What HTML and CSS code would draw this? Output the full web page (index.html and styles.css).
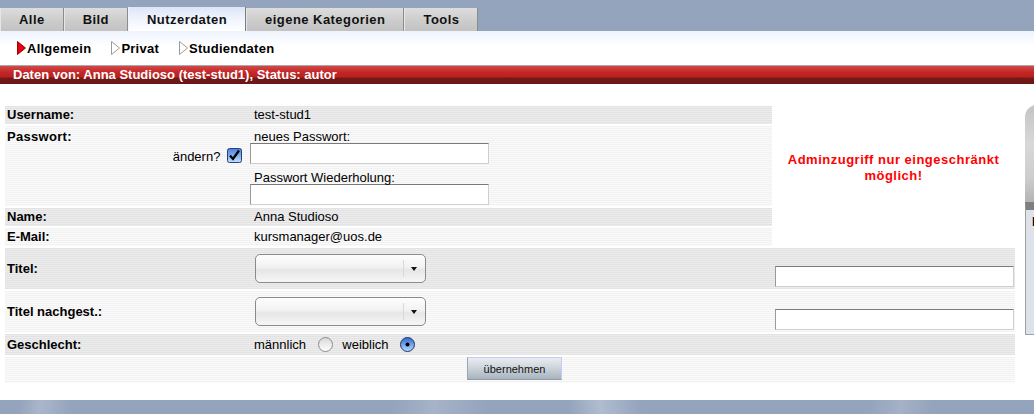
FILE: index.html
```html
<!DOCTYPE html>
<html>
<head>
	<meta charset="utf-8">
	<title>Nutzerdaten - Allgemein</title>
	<link rel="stylesheet" href="styles.css">
</head>
<body>
	<div class="tabs">
		<div class="tab">Alle</div>
		<div class="tab">Bild</div>
		<div class="tab active">Nutzerdaten</div>
		<div class="tab">eigene Kategorien</div>
		<div class="tab">Tools</div>
	</div>
	<div class="page">
		<div class="subnav">
			<span class="item current">
				<svg class="tri" width="9" height="14" viewBox="0 0 9 14"><polygon points="0.5,0.5 8.5,7 0.5,13.5" fill="#e8000a" stroke="#a00008"/></svg>Allgemein
			</span>
			<span class="item">
				<svg class="tri" width="9" height="14" viewBox="0 0 9 14"><polygon points="0.5,0.5 8.5,7 0.5,13.5" fill="#fff" stroke="#9a9a9a"/></svg>Privat
			</span>
			<span class="item">
				<svg class="tri" width="9" height="14" viewBox="0 0 9 14"><polygon points="0.5,0.5 8.5,7 0.5,13.5" fill="#fff" stroke="#9a9a9a"/></svg>Studiendaten
			</span>
		</div>
		<div class="topic">Daten von: Anna Studioso (test-stud1), Status: autor</div>
		<div class="main">
			<table class="form">
				<colgroup>
					<col class="c1">
					<col class="c2">
					<col class="c3">
				</colgroup>
				<tr class="dark">
					<td class="label">Username:</td>
					<td class="value">test-stud1</td>
					<td class="notice" rowspan="4">Adminzugriff nur eingeschränkt<br>möglich!</td>
				</tr>
				<tr class="light pw">
					<td class="label top">
						<div class="pwlabel">Passwort:</div>
						<div class="change">ändern?
							<svg class="check" width="15" height="15" viewBox="0 0 15 15">
								<defs>
									<linearGradient id="cb" x1="0" y1="0" x2="0" y2="1">
										<stop offset="0" stop-color="#4a7fd8"/>
										<stop offset="0.5" stop-color="#7fb0f0"/>
										<stop offset="1" stop-color="#c4e2ff"/>
									</linearGradient>
								</defs>
								<rect x="0.5" y="0.5" width="14" height="14" rx="2" fill="url(#cb)" stroke="#2a3f78"/>
								<path d="M3 7.5 L6 11 L12 2.5" fill="none" stroke="#000" stroke-width="2.2"/>
							</svg>
						</div>
					</td>
					<td class="value top">
						<div class="fieldlabel">neues Passwort:</div>
						<input class="text" type="password">
						<div class="fieldlabel second">Passwort Wiederholung:</div>
						<input class="text" type="password">
					</td>
				</tr>
				<tr class="dark">
					<td class="label">Name:</td>
					<td class="value">Anna Studioso</td>
				</tr>
				<tr class="light">
					<td class="label">E-Mail:</td>
					<td class="value">kursmanager@uos.de</td>
				</tr>
				<tr class="dark tall">
					<td class="label">Titel:</td>
					<td class="value"><span class="select"></span></td>
					<td class="extra"><input class="text" type="text"></td>
				</tr>
				<tr class="light tall">
					<td class="label">Titel nachgest.:</td>
					<td class="value"><span class="select"></span></td>
					<td class="extra"><input class="text" type="text"></td>
				</tr>
				<tr class="dark gender">
					<td class="label">Geschlecht:</td>
					<td class="value">männlich
						<svg class="radio" width="15" height="15" viewBox="0 0 15 15">
							<defs>
								<linearGradient id="ru" x1="0" y1="0" x2="0" y2="1">
									<stop offset="0" stop-color="#d8d8d8"/>
									<stop offset="1" stop-color="#ffffff"/>
								</linearGradient>
							</defs>
							<circle cx="7.5" cy="7.5" r="7" fill="url(#ru)" stroke="#8a8a8a"/>
						</svg>
						<span class="opt">weiblich</span>
						<svg class="radio" width="15" height="15" viewBox="0 0 15 15">
							<defs>
								<linearGradient id="rc" x1="0" y1="0" x2="0" y2="1">
									<stop offset="0" stop-color="#2f68d0"/>
									<stop offset="1" stop-color="#b8dcff"/>
								</linearGradient>
							</defs>
							<circle cx="7.5" cy="7.5" r="7" fill="url(#rc)" stroke="#23366e"/>
							<circle cx="7.5" cy="7.5" r="2" fill="#000"/>
						</svg>
					</td>
					<td class="extra"></td>
				</tr>
				<tr class="light submit">
					<td colspan="3"><button class="button">übernehmen</button></td>
				</tr>
			</table>
			<div class="sidebar">
				<div class="sidehead"></div>
				<div class="sidebox">Informationen</div>
			</div>
		</div>
	</div>
	<div class="footer"></div>
</body>
</html>
```

FILE: styles.css
```css
body {
	margin: 0;
	background: #94a4bd;
	font-family: "Liberation Sans", Arial, sans-serif;
	font-size: 13px;
	color: #000;
	overflow: hidden;
}

/* Reiter oben */
.tabs {
	display: flex;
	height: 31px;
	padding-top: 8px;
	box-sizing: border-box;
}

.tab {
	height: 23px;
	line-height: 23px;
	padding: 0 18px;
	font-weight: bold;
	letter-spacing: 0.45px;
	color: #111;
	background: linear-gradient(#dddddd, #cbcbcb 60%, #c2c2c2);
	border-left: 1px solid #e6e6e6;
	border-right: 1px solid #8c8c8c;
}

.tab.active {
	margin-top: -1px;
	height: 24px;
	line-height: 25px;
	background: linear-gradient(#dce5f8, #eef3fd 45%, #fff);
	border-left-color: #f4f4f4;
	border-right-color: #7d7d7d;
}

/* weisser Inhaltsbereich */
.page {
	background: #fff;
	height: 369px;
	overflow: hidden;
}

.subnav {
	height: 34px;
	padding-left: 17px;
	display: flex;
	align-items: center;
	font-weight: bold;
	letter-spacing: 0.25px;
	background: linear-gradient(#eef3fd, #fff 45%);
}

.subnav .item {
	display: inline-flex;
	align-items: center;
	margin-right: 20px;
}

.subnav .tri {
	margin-right: 1px;
}

.topic {
	border-top: 1px solid #a9a9a9;
	height: 18px;
	line-height: 18px;
	padding-left: 13px;
	color: #fff;
	font-weight: bold;
	background: linear-gradient(#d24a4a, #c42626 35%, #b82121 62%, #751818 66%, #6a1717);
}

.main {
	display: flex;
	align-items: flex-start;
	padding-top: 20px;
	overflow: hidden;
}

/* Formular */
.form {
	flex-shrink: 0;
	margin-left: 5px;
	width: 1010px;
	table-layout: fixed;
	border-collapse: separate;
	border-spacing: 0 2px;
}

.form col.c1 { width: 245px; }
.form col.c2 { width: 522px; }
.form col.c3 { width: 243px; }

.form td {
	padding: 0;
	height: 18px;
	line-height: 16px;
	vertical-align: middle;
}

.form .dark td {
	background: repeating-linear-gradient(#e3e3e3 0 1px, #ececec 1px 2px);
}

.form .light td {
	background: repeating-linear-gradient(#f2f2f2 0 1px, #fafafa 1px 2px);
}

.form td.notice {
	background: #fff;
	text-align: center;
	color: #f00;
	font-weight: bold;
	padding-bottom: 16px;
	letter-spacing: 0.5px;
}

.form td.label {
	padding-left: 2px;
	font-weight: bold;
}

.form td.value {
	padding-left: 4px;
}

.form td.top {
	vertical-align: top;
}

.form .pw td {
	height: 80px;
}

.pwlabel,
.fieldlabel {
	line-height: 13px;
	margin-top: 4px;
}

.pwlabel {
	letter-spacing: 0.3px;
}

.fieldlabel.second {
	margin-top: 7px;
}

.change {
	text-align: right;
	padding-right: 8px;
	margin-top: 5px;
	font-weight: normal;
}

.change .check {
	vertical-align: -2px;
	margin-left: 3px;
}

.form td.value input.text {
	margin-left: -4px;
}

input.text {
	display: block;
	box-sizing: border-box;
	width: 239px;
	height: 21px;
	margin: 0;
	border: 1px solid #cfcfcf;
	border-top-color: #7a7a7a;
	border-left-color: #9a9a9a;
	background: #fff;
}

.form .tall td {
	height: 41px;
}

.form td.extra {
	padding-left: 3px;
	vertical-align: bottom;
}

.form td.extra input.text {
	margin-bottom: 2px;
}

.select {
	position: relative;
	display: block;
	width: 171px;
	height: 29px;
	margin-left: 1px;
	box-sizing: border-box;
	border: 1px solid #8a8a8a;
	border-radius: 5px;
	background: linear-gradient(#fdfdfd, #f2f2f2 45%, #e6e6e6 55%, #f6f6f6);
}

.select::before {
	content: "";
	position: absolute;
	right: 21px;
	top: 5px;
	bottom: 5px;
	border-left: 1px solid #d8d8d8;
}

.select::after {
	content: "";
	position: absolute;
	right: 8px;
	top: 12px;
	border-left: 3px solid transparent;
	border-right: 3px solid transparent;
	border-top: 4px solid #111;
}

.form .gender td {
	height: 21px;
}

.radio {
	vertical-align: -3px;
	margin: 0 6px 0 8px;
}

.form .submit td {
	height: 26px;
	vertical-align: top;
	text-align: center;
}

.button {
	width: 95px;
	height: 23px;
	margin: 0 0 0 9px;
	padding: 0;
	font-family: "Liberation Sans", Arial, sans-serif;
	font-size: 11px;
	color: #111;
	border: 1px solid #c5cbf2;
	border-left-color: #9aa6b2;
	border-bottom-color: #8e9aa6;
	background: linear-gradient(#e9edf1, #cbd3da 50%, #a7b3bd);
}

/* rechte Spalte, abgeschnitten */
.sidebar {
	flex-shrink: 0;
	width: 200px;
	margin-left: 10px;
	margin-top: 1px;
}

.sidehead {
	height: 97px;
	border-top-left-radius: 12px;
	background: linear-gradient(#c4c4c4, #d8d8d8 40%, #cdcdcd 75%, #b4b4b4);
}

.sidebox {
	height: 133px;
	box-sizing: border-box;
	border-top: 8px solid #7f7f7f;
	border-left: 1px solid #a0a0a0;
	border-bottom: 1px solid #a0a0a0;
	padding: 4px 0 0 6px;
	background: #dde1ea;
	font-weight: bold;
	line-height: 16px;
}

.footer {
	height: 14px;
	background:
		linear-gradient(100deg, transparent 2%, #aab6ca 4%, transparent 7%),
		linear-gradient(100deg, transparent 38%, #a6b3c8 42%, transparent 47%),
		linear-gradient(80deg, transparent 55%, #b0bccf 58%, transparent 62%),
		linear-gradient(100deg, transparent 84%, #a4b1c6 87%, transparent 90%),
		#94a4bd;
}
```
